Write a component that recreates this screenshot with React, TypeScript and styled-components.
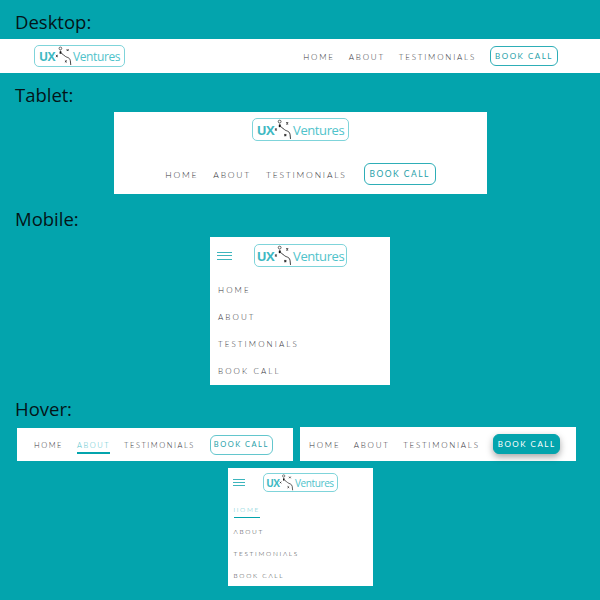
import React from "react";
import styled, { createGlobalStyle } from "styled-components";

const TEAL = "#03a4ad";
const LOGO_TEAL = "#4fc3cb";

const GlobalStyle = createGlobalStyle`
  html, body {
    margin: 0;
    padding: 0;
    background: ${TEAL};
  }
`;

const LogoMark: React.FC<{ size: number }> = ({ size }) => (
  <MarkSvg viewBox="0 0 20 22" $size={size}>
    <circle cx="6" cy="2.6" r="1.5" fill="none" stroke="#333" strokeWidth="0.8" />
    <path d="M6 5 C6.5 9 9 9 11 11 C13 13 16 12 17 16 L17.5 21" fill="none" stroke="#333" strokeWidth="1" />
    <path d="M6 6 L6 8.5" stroke="#111" strokeWidth="1.8" />
    <path d="M13 3.5 l2 2 M15 3.5 l-2 2" stroke="#333" strokeWidth="1.1" />
    <path d="M1 10 l2 2 M3 10 l-2 2" stroke="#333" strokeWidth="1.1" />
    <path d="M11 16 l2 2 M13 16 l-2 2" stroke="#333" strokeWidth="1.1" />
  </MarkSvg>
);

const Logo: React.FC<{ w: number; h: number; fs: number }> = ({ w, h, fs }) => (
  <LogoBox $w={w} $h={h}>
    <LogoUx $fs={fs}>UX</LogoUx>
    <LogoMark size={h} />
    <LogoWord $fs={fs}>Ventures</LogoWord>
  </LogoBox>
);

const Links: React.FC<{ fs: number; spacing: number; active?: string }> = ({ fs, spacing, active }) => (
  <>
    {["HOME", "ABOUT", "TESTIMONIALS"].map((t) => (
      <NavLink key={t} $fs={fs} $spacing={spacing} $active={active === t}>{t}</NavLink>
    ))}
  </>
);

const MobileMenu: React.FC<{ active?: string; fs: number; spacing: number; gap: number; top: number; left: number }> = ({
  active,
  fs,
  spacing,
  gap,
  top,
  left,
}) => (
  <MenuList $gap={gap} $top={top} $left={left}>
    {["HOME", "ABOUT", "TESTIMONIALS", "BOOK CALL"].map((t) => (
      <NavLink key={t} $fs={fs} $active={active === t} $spacing={spacing}>{t}</NavLink>
    ))}
  </MenuList>
);

const App: React.FC = () => {
  return (
    <Page>
      <GlobalStyle />
      <Label $top={8} $bottom={4}>Desktop:</Label>
      <DesktopBar>
        <Logo w={91} h={22} fs={13} />
        <NavRow $gap={14}>
          <Links fs={8} spacing={1.8} />
          <BookButton $w={68} $h={20} $fs={8} $ml={0}>BOOK CALL</BookButton>
        </NavRow>
      </DesktopBar>

      <Label $top={8} $bottom={4}>Tablet:</Label>
      <TabletBar>
        <Logo w={97} h={23} fs={14} />
        <NavRow $gap={15}>
          <Links fs={8.5} spacing={1.8} />
          <BookButton $w={72} $h={22} $fs={8.5} $ml={2}>BOOK CALL</BookButton>
        </NavRow>
      </TabletBar>

      <Label $top={11} $bottom={5}>Mobile:</Label>
      <MobileBar $w={180} $h={148} $top={0}>
        <MobileHead $pad={7} $gap={22} $logoH={23}>
          <Burger $w={15} $gap={2.5} />
          <Logo w={93} h={23} fs={14} />
        </MobileHead>
        <MobileMenu fs={8} spacing={2.1} gap={15} top={17} left={8} />
      </MobileBar>

      <Label $top={10} $bottom={5}>Hover:</Label>
      <HoverRow>
        <HoverBar $pl={17} $mt={1}>
          <NavRow $gap={14}>
            <Links fs={7.5} spacing={1.55} active="ABOUT" />
            <BookButton $w={63} $h={20} $fs={7.5} $ml={1} $pale>BOOK CALL</BookButton>
          </NavRow>
        </HoverBar>
        <HoverBar $pl={9} $mt={0}>
          <NavRow $gap={13.5}>
            <Links fs={8} spacing={1.75} />
            <BookButton $w={67} $h={20} $fs={8} $ml={0} $filled>BOOK CALL</BookButton>
          </NavRow>
        </HoverBar>
      </HoverRow>
      <MobileBar $w={145} $h={118} $top={7}>
        <MobileHead $pad={5} $gap={18} $logoH={19}>
          <Burger $w={12} $gap={2} />
          <Logo w={75} h={19} fs={11} />
        </MobileHead>
        <MobileMenu fs={6.5} spacing={1.7} gap={10} top={12} left={6} active="HOME" />
      </MobileBar>
    </Page>
  );
};

const Page = styled.div`
  width: 600px;
  height: 600px;
  overflow: hidden;
  background: ${TEAL};
`;

const Label = styled.div<{ $top: number; $bottom: number }>`
  padding: ${(p) => p.$top}px 0 0 15px;
  font-family: "Open Sans", sans-serif;
  font-size: 18.5px;
  line-height: 27px;
  color: #041418;
  height: 27px;
  margin-bottom: ${(p) => p.$bottom}px;
`;

const DesktopBar = styled.header`
  display: flex;
  align-items: center;
  justify-content: space-between;
  height: 34px;
  padding: 0 42px 0 34px;
  background: #fff;
`;

const TabletBar = styled.header`
  display: flex;
  flex-direction: column;
  align-items: center;
  justify-content: space-between;
  box-sizing: border-box;
  width: 373px;
  height: 82px;
  margin-left: 114px;
  padding: 6px 0 9px;
  background: #fff;
`;

const NavRow = styled.nav<{ $gap: number }>`
  display: flex;
  align-items: center;
  gap: ${(p) => p.$gap}px;
`;

const NavLink = styled.a<{ $fs: number; $active?: boolean; $spacing: number }>`
  position: relative;
  font-family: Lato, sans-serif;
  font-weight: 300;
  font-size: ${(p) => p.$fs}px;
  line-height: 12px;
  letter-spacing: ${(p) => p.$spacing}px;
  white-space: nowrap;
  color: ${(p) => (p.$active ? "#55c4cc" : "#35353a")};
  align-self: flex-start;
  &::after {
    content: "";
    display: ${(p) => (p.$active ? "block" : "none")};
    position: absolute;
    left: 0;
    right: 0;
    bottom: -2px;
    height: 1.5px;
    background: ${TEAL};
  }
  nav > & {
    align-self: center;
    padding-top: 2px;
  }
`;

const BookButton = styled.a<{
  $w: number;
  $h: number;
  $fs: number;
  $ml: number;
  $pale?: boolean;
  $filled?: boolean;
}>`
  display: flex;
  align-items: center;
  justify-content: center;
  box-sizing: border-box;
  width: ${(p) => p.$w}px;
  height: ${(p) => p.$h}px;
  margin-left: ${(p) => p.$ml}px;
  border: 1.5px solid ${(p) => (p.$filled ? TEAL : p.$pale ? "#63c6cd" : "#2eaeb7")};
  border-radius: 6px;
  background: ${(p) => (p.$filled ? TEAL : "#fff")};
  box-shadow: ${(p) => (p.$filled ? "0 3px 7px rgba(0, 0, 0, 0.35)" : "none")};
  font-family: Lato, sans-serif;
  font-weight: 400;
  font-size: ${(p) => p.$fs}px;
  letter-spacing: 1.5px;
  white-space: nowrap;
  color: ${(p) => (p.$filled ? "#fff" : "#279fa9")};
`;

const LogoBox = styled.div<{ $w: number; $h: number }>`
  display: flex;
  align-items: center;
  justify-content: center;
  flex: none;
  box-sizing: border-box;
  width: ${(p) => p.$w}px;
  height: ${(p) => p.$h}px;
  border: 1.5px solid #7fd4da;
  border-radius: 5px;
  background: #fff;
`;

const LogoUx = styled.span<{ $fs: number }>`
  font-family: "Open Sans", sans-serif;
  font-weight: 700;
  font-size: ${(p) => p.$fs - 1}px;
  letter-spacing: -0.5px;
  color: #3fb9c3;
`;

const LogoWord = styled.span<{ $fs: number }>`
  font-family: "Open Sans", sans-serif;
  font-size: ${(p) => p.$fs - 1}px;
  letter-spacing: -0.4px;
  color: ${LOGO_TEAL};
`;

const MarkSvg = styled.svg<{ $size: number }>`
  flex: none;
  width: ${(p) => p.$size * 0.82}px;
  height: ${(p) => p.$size}px;
`;

const MobileBar = styled.div<{ $w: number; $h: number; $top: number }>`
  box-sizing: border-box;
  width: ${(p) => p.$w}px;
  height: ${(p) => p.$h}px;
  margin: ${(p) => p.$top}px auto 0;
  background: #fff;
`;

const MobileHead = styled.div<{ $pad: number; $gap: number; $logoH: number }>`
  display: flex;
  align-items: center;
  gap: ${(p) => p.$gap}px;
  height: ${(p) => p.$logoH}px;
  padding: ${(p) => p.$pad}px 0 0 ${(p) => p.$pad}px;
`;

const Burger = styled.div<{ $w: number; $gap: number }>`
  flex: none;
  width: ${(p) => p.$w}px;
  height: ${(p) => p.$gap * 2 + 3}px;
  border-top: 1px solid #3db5bd;
  border-bottom: 1px solid #3db5bd;
  position: relative;
  box-sizing: border-box;
  &::after {
    content: "";
    position: absolute;
    left: 0;
    right: 0;
    top: ${(p) => p.$gap}px;
    height: 1px;
    background: #3db5bd;
  }
`;

const MenuList = styled.div<{ $gap: number; $top: number; $left: number }>`
  display: flex;
  flex-direction: column;
  gap: ${(p) => p.$gap}px;
  padding: ${(p) => p.$top}px 0 0 ${(p) => p.$left}px;
`;

const HoverRow = styled.div`
  display: flex;
  gap: 7px;
  padding-left: 17px;
  height: 34px;
`;

const HoverBar = styled.div<{ $pl: number; $mt: number }>`
  display: flex;
  align-items: center;
  box-sizing: border-box;
  width: 276px;
  height: ${(p) => 34 - p.$mt}px;
  margin-top: ${(p) => p.$mt}px;
  padding-left: ${(p) => p.$pl}px;
  background: #fff;
`;

export default App;
